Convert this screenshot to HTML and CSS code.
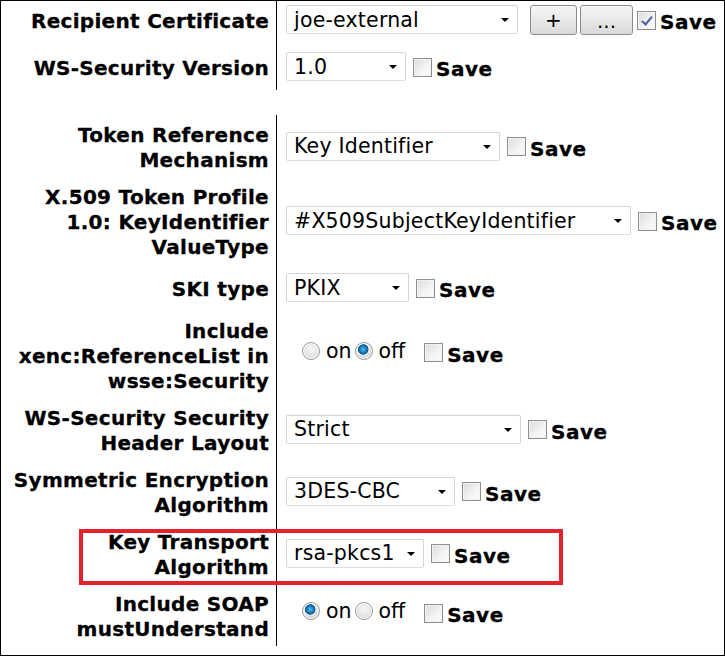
FILE: index.html
```html
<!DOCTYPE html>
<html lang="en">
<head>
  <meta charset="UTF-8">
  <title>Encryption Settings</title>
  <link rel="stylesheet" href="styles.css">
</head>
<body>
  <div class="panel">
    <table class="form first">
      <tr>
        <th>Recipient Certificate</th>
        <td>
          <div class="field">
            <span class="select w-cert"><select><option>joe-external</option></select></span>
            <button class="btn plus">+</button>
            <button class="btn more">...</button>
            <label class="save"><span class="check checked"></span>Save</label>
          </div>
        </td>
      </tr>
      <tr>
        <th>WS-Security Version</th>
        <td>
          <div class="field">
            <span class="select w-ver"><select><option>1.0</option></select></span>
            <label class="save"><span class="check"></span>Save</label>
          </div>
        </td>
      </tr>
    </table>

    <table class="form second">
      <tr>
        <th>Token Reference<br>Mechanism</th>
        <td>
          <div class="field">
            <span class="select w-token"><select><option>Key Identifier</option></select></span>
            <label class="save"><span class="check"></span>Save</label>
          </div>
        </td>
      </tr>
      <tr>
        <th>X.509 Token Profile<br>1.0: KeyIdentifier<br>ValueType</th>
        <td>
          <div class="field">
            <span class="select w-x509"><select><option>#X509SubjectKeyIdentifier</option></select></span>
            <label class="save"><span class="check"></span>Save</label>
          </div>
        </td>
      </tr>
      <tr>
        <th>SKI type</th>
        <td>
          <div class="field">
            <span class="select w-ski"><select><option>PKIX</option></select></span>
            <label class="save"><span class="check"></span>Save</label>
          </div>
        </td>
      </tr>
      <tr>
        <th>Include<br>xenc:ReferenceList in<br>wsse:Security</th>
        <td>
          <div class="field radios">
            <label class="opt"><span class="radio"></span>on</label>
            <label class="opt"><span class="radio on"></span>off</label>
            <label class="save"><span class="check"></span>Save</label>
          </div>
        </td>
      </tr>
      <tr>
        <th>WS-Security Security<br>Header Layout</th>
        <td>
          <div class="field">
            <span class="select w-layout"><select><option>Strict</option></select></span>
            <label class="save"><span class="check"></span>Save</label>
          </div>
        </td>
      </tr>
      <tr>
        <th>Symmetric Encryption<br>Algorithm</th>
        <td>
          <div class="field">
            <span class="select w-sym"><select><option>3DES-CBC</option></select></span>
            <label class="save"><span class="check"></span>Save</label>
          </div>
        </td>
      </tr>
      <tr>
        <th>Key Transport<br>Algorithm</th>
        <td>
          <div class="field">
            <span class="select w-key"><select><option>rsa-pkcs1</option></select></span>
            <label class="save"><span class="check"></span>Save</label>
          </div>
        </td>
      </tr>
      <tr>
        <th>Include SOAP<br>mustUnderstand</th>
        <td>
          <div class="field radios">
            <label class="opt"><span class="radio on"></span>on</label>
            <label class="opt"><span class="radio"></span>off</label>
            <label class="save"><span class="check"></span>Save</label>
          </div>
        </td>
      </tr>
    </table>

    <div class="highlight"></div>
  </div>
</body>
</html>
```

FILE: styles.css
```css
body {
  margin: 0;
  background: #fff;
  font-family: "DejaVu Sans", Verdana, sans-serif;
  color: #000;
}

.panel {
  position: relative;
  width: 725px;
  height: 656px;
  box-sizing: border-box;
  border: 1px solid #000;
  overflow: hidden;
}

.form {
  border-collapse: separate;
  border-spacing: 0;
}

.form.first {
  margin-top: -5px;
}

.form.second {
  margin-top: 25px;
}

.form th {
  width: 268px;
  padding: 8px 7px 4px 0;
  border-right: 1px solid #000;
  text-align: right;
  vertical-align: middle;
  font-size: 20px;
  line-height: 25px;
  font-weight: bold;
  letter-spacing: 0.3px;
  -webkit-text-stroke: 0.3px #000;
  white-space: nowrap;
}

.form td {
  padding: 6px 0 6px 9px;
  vertical-align: middle;
}

.field {
  display: flex;
  align-items: center;
  height: 35px;
}

/* selects */
.select {
  position: relative;
  display: inline-block;
  height: 29px;
}

.select select {
  appearance: none;
  -webkit-appearance: none;
  width: 100%;
  height: 29px;
  margin: 0;
  padding: 0 0 0 7px;
  border: 1px solid #d4d4d4;
  border-bottom-color: #d9dfe8;
  border-radius: 2px;
  background: #fff;
  font-family: inherit;
  font-size: 20.5px;
  letter-spacing: 0.2px;
  color: #000;
}

.select::after {
  content: "";
  position: absolute;
  right: 9px;
  top: 13px;
  border-left: 4px solid transparent;
  border-right: 4px solid transparent;
  border-top: 4px solid #000;
}

.w-cert { width: 232px; }
.w-ver { width: 120px; }
.w-token { width: 214px; }
.w-x509 { width: 345px; }
.w-ski { width: 123px; }
.w-layout { width: 235px; }
.w-sym { width: 169px; }
.w-key { width: 138px; }

/* buttons */
.btn {
  height: 30px;
  margin: 0;
  padding: 0;
  border: 1px solid #8c8c8c;
  border-radius: 3px;
  background: linear-gradient(#f6f6f6, #e9e9e9 50%, #d9d9d9);
  font-family: inherit;
  font-size: 20px;
  color: #000;
}

.btn.plus {
  width: 47px;
  margin-left: 12px;
}

.btn.more {
  width: 53px;
  margin-left: 3px;
  line-height: 30px;
}

/* checkbox + Save */
.save {
  display: flex;
  align-items: center;
  margin-left: 7px;
  margin-top: 5px;
  font-size: 20px;
  font-weight: bold;
  letter-spacing: 0.5px;
  -webkit-text-stroke: 0.3px #000;
}

.btn + .btn + .save {
  margin-left: 4px;
}

.check {
  position: relative;
  width: 17px;
  height: 17px;
  margin-right: 4px;
  margin-top: -4px;
  border: 1px solid #8e8f8f;
  background: linear-gradient(135deg, #dcdcdc, #f4f4f4 60%, #fbfbfb);
  box-shadow: inset 0 0 0 1px #f2f2f2;
}

.check.checked::after {
  content: "";
  position: absolute;
  left: 6px;
  top: 2px;
  width: 4px;
  height: 9px;
  border-right: 2px solid #4a5fa8;
  border-bottom: 2px solid #4a5fa8;
  transform: rotate(40deg);
}

/* radios */
.radios {
  padding-left: 16px;
}

.opt {
  display: flex;
  align-items: center;
  font-size: 20.5px;
  margin-top: -8px;
}

.opt + .opt {
  margin-left: 3px;
}

.radios .save {
  margin-left: 19px;
  margin-top: 0;
}

.radio {
  width: 16px;
  height: 16px;
  margin-right: 6px;
  border: 1px solid #9a9a9a;
  border-radius: 50%;
  background: radial-gradient(circle at 50% 40%, #f6f6f6, #d6d6d6);
  box-shadow: inset 0 0 0 1px #fff;
}

.radio.on {
  background: radial-gradient(circle at 45% 40%, #5fc0ee 0, #1b7fc0 3px, #0f5a92 5px, #e8e8e8 5.5px, #d2d2d2 9px);
}

/* annotation overlay */
.highlight {
  position: absolute;
  left: 78px;
  top: 528px;
  width: 476px;
  height: 48px;
  border: 4px solid #e8202a;
}
```
